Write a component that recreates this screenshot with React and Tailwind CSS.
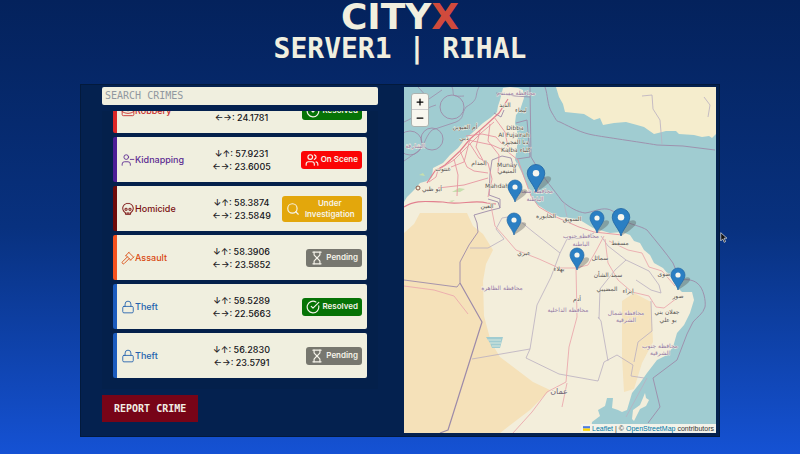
import React from "react";
import {
  UserMinus,
  Gavel,
  Lock,
  Users,
  Search,
  Hourglass,
  CircleCheckBig,
  BriefcaseBusiness,
  Plus,
  Minus,
} from "lucide-react";
import { PiSkull } from "react-icons/pi";

const KINDS = {
  Robbery: { icon: BriefcaseBusiness, tone: "text-[#c92a2a]", edge: "border-[#dc2626]" },
  Kidnapping: { icon: UserMinus, tone: "text-[#5b2a91]", edge: "border-[#4c1d95]" },
  Homicide: { icon: PiSkull, tone: "text-[#7a1010]", edge: "border-[#6e0a0a]" },
  Assault: { icon: Gavel, tone: "text-[#d9480f]", edge: "border-[#f4511e]" },
  Theft: { icon: Lock, tone: "text-[#2462ae]", edge: "border-[#1c5cbf]" },
};

const STATUSES = {
  Resolved: { icon: CircleCheckBig, tone: "bg-[#067306]" },
  "On Scene": { icon: Users, tone: "bg-[#fb0505]" },
  "Under Investigation": { icon: Search, tone: "bg-[#e3a70c]" },
  Pending: { icon: Hourglass, tone: "bg-[#77776f]" },
};

const CRIMES = [
  { kind: "Robbery", lat: "56.7301", lng: "24.1781", status: "Resolved" },
  { kind: "Kidnapping", lat: "57.9231", lng: "23.6005", status: "On Scene" },
  { kind: "Homicide", lat: "58.3874", lng: "23.5849", status: "Under Investigation" },
  { kind: "Assault", lat: "58.3906", lng: "23.5852", status: "Pending" },
  { kind: "Theft", lat: "59.5289", lng: "22.5663", status: "Resolved" },
  { kind: "Theft", lat: "56.2830", lng: "23.5791", status: "Pending" },
];

function CrimeCard({ crime }) {
  const kind = KINDS[crime.kind];
  const status = STATUSES[crime.status];
  const KindIcon = kind.icon;
  const StatusIcon = status.icon;
  return (
    <li
      className={`grid h-[45px] shrink-0 grid-cols-3 items-center rounded-[2px] border-l-4 bg-[#f0efdf] pl-1 pr-[5px] ${kind.edge}`}
    >
      <span className={`flex items-center text-[9px] font-medium ${kind.tone}`}>
        <KindIcon size={14} strokeWidth={1.5} className="shrink-0" />
        {crime.kind}
      </span>
      <span className="text-center text-[9px] font-medium leading-[13px] text-[#15151a]">
        <span className="block">↓↑: {crime.lat}</span>
        <span className="block">←→: {crime.lng}</span>
      </span>
      <span
        className={`flex min-h-[18px] items-center gap-0.5 justify-self-end rounded-[3px] py-0.5 pl-1 pr-1 text-center text-[8px] font-semibold leading-[11px] text-[#f6f4ea] ${status.tone}`}
      >
        <StatusIcon size={14} strokeWidth={2} className="shrink-0" />
        {crime.status}
      </span>
    </li>
  );
}

const MARKERS = [
  [132, 105, 1.25],
  [111, 115, 1],
  [110, 148, 1],
  [193, 146, 1],
  [217, 149, 1.25],
  [173, 183, 1],
  [274, 203, 1],
];

const PLACES = [
  ["دبي", 60, 53],
  ["Dibba", 111, 43],
  ["Al Fujairah", 110, 50],
  ["دبا الفجيرة", 111, 57],
  ["Kalba كلباء", 112, 65],
  ["أم القيوين", 61, 42],
  ["الذيد", 101, 20],
  ["ليماء", 117, 25],
  ["المدام", 75, 78],
  ["غنتوت", 39, 84],
  ["Munay", 103, 80],
  ["المنيعي", 103, 86],
  ["Mahdah", 93, 101],
  ["أبو ظبي", 28, 104],
  ["العين", 83, 121],
  ["الخابورة", 142, 131],
  ["السويق", 168, 134],
  ["مسقط", 216, 158],
  ["عبري", 120, 168],
  ["بهلاء", 155, 184],
  ["سمائل", 196, 173],
  ["سمد الشأن", 204, 190],
  ["المضيبي", 203, 204],
  ["إبراء", 224, 206],
  ["أدم", 173, 214],
  ["ضوى", 260, 189],
  ["صور", 274, 211],
  ["جعلان بني", 263, 227],
  ["بو علي", 264, 235],
];

const REGIONS = [
  ["محافظة مسندم", 112, 8],
  ["الشارقة", 11, 61],
  ["محافظة شمال", 131, 106],
  ["الباطنة", 131, 114],
  ["محافظة جنوب", 177, 151],
  ["الباطنة", 177, 159],
  ["محافظة الظاهرة", 98, 203],
  ["محافظة الداخلية", 164, 225],
  ["محافظة شمال", 222, 228],
  ["الشرقية", 222, 235],
  ["محافظة جنوب", 256, 261],
  ["الشرقية", 256, 268],
];

function MapCanvas() {
  return (
    <svg
      viewBox="0 0 312 346"
      preserveAspectRatio="xMidYMid slice"
      className="absolute inset-0 h-full w-full"
      role="img"
      aria-label="Map of reported crimes in Oman"
    >
      <rect width="312" height="346" fill="#a0ccd1" />
      <path
        fill="#f3eedb"
        d="M0 115L3 110 10 103 16 96 23 94 28 90 29 81 39 76 46 68 54 61 61 52 68 46 79 36 86 31 93 25 94 19 96 13 99 1 106 0 114 1 119 3 120 11 116 23 112 28 111 36 114 48 113 60 111 73 117 84 121 93 129 113 134 118 143 124 156 130 166 131 176 133 189 141 206 146 218 145 226 148 230 154 236 156 240 163 246 168 250 176 259 181 269 193 273 200 278 205 288 205 290 213 286 226 280 238 273 246 269 260 263 268 253 273 243 286 236 296 228 306 223 323 218 325 214 323 208 321 209 311 203 311 201 319 194 323 196 329 188 335 187 346 0 346Z"
      />
      <path
        fill="#f5e1b9"
        d="M0 146L10 137 16 126 63 126 69 139 79 147 89 163 82 177 79 194 80 229 87 255 96 270 129 295 146 303 126 323 96 346 0 346Z"
      />
      <path fill="#f5e3bd" d="M218 214L230 206 247 215 249 255 238 276 230 302 220 305 218 270Z" />
      <path
        fill="#f5edcd"
        d="M152 0L155 10 159 17 161 25 180 27 190 33 196 31 199 38 210 36 222 35 233 38 240 40 250 47 262 44 272 44 275 47 290 48 298 50 305 49 308 51 312 47V0Z"
      />
      <path fill="#f3eedb" d="M241 306L242 311 245 313 242 319 236 322 230 334 228 332 229 323 236 318 239 311Z" />
      <path fill="#a0ccd1" d="M82 250L99 250 96 261 88 261 86 256Z" />
      <path stroke="#d9e8dd" d="M84 253H97M86 256H97M88 259H96" />
      <path fill="#c6dfae" d="M48 105l7-4 6 1-5 3zM45 114l6-1-3 2zM15 88l4-2 2 3z" />

      <g fill="none" stroke="#9d8ba9" strokeWidth="0.9" strokeLinejoin="round">
        <path d="M0 193L53 200 56 196 56 175 65 158 74 145 73 136 70 128 84 124 96 121 94 115 84 112" />
        <path d="M56 196L78 235 44 343 36 346" strokeWidth="1.2" />
        <path d="M141 0C144 8 143 18 148 26S152 34 156 35C168 41 178 46 189 48S235 55 253 58L279 59 311 63" />
        <path d="M126 0L127 70 133 80C139 90 150 103 158 114 166 121 174 125 181 126 189 125 196 121 203 122 211 123 214 130 219 133 227 138 237 139 243 143 252 154 262 166 269 176L276 193C284 192 289 193 293 196 300 201 302 215 301 220 299 227 293 230 289 235L283 247 273 273 249 291 256 320 244 336" />
        <circle cx="48" cy="20" r="12" />
        <circle cx="28" cy="52" r="11" />
        <circle cx="6" cy="56" r="12" />
        <path d="M75 0C70 9 76 12 62 20 57 27 61 31 52 35L28 43C20 51 21 60 13 65L0 74M0 35C12 30 18 22 32 18M14 0L25 12 38 3M48 0C51 7 45 10 60 9M92 6L111 9 126 10" strokeWidth="0.8" />
        <path d="M112 36L123 33 126 70 113 72M90 26L97 30 100 23M86 87L88 73 98 69 107 71 110 82M86 87L85 108 96 112 96 121" />
      </g>

      <g fill="none" stroke="#b9aec0" strokeWidth="0.8">
        <path d="M66 161L84 161 100 152 92 142 98 131 110 129 128 144 156 166 163 152 180 151 190 146M156 166L147 190 133 218 126 262 68 272M126 262L122 271 155 287 194 294 200 275 213 268 229 278 227 289 240 291M194 230L197 234 204 274M195 232L196 202 211 183 222 173 204 159 197 149M222 173L245 184 255 198 257 206 247 203 232 193M247 214L248 244 234 255 230 275M238 9L248 8 249 22 256 33 258 57M300 10L306 18 304 30" />
        <path d="M243 291L222 330M160 116L163 130" />
      </g>
      <g fill="none" stroke="#eba9ae" strokeWidth="0.9">
        <path d="M0 120C12 112 24 115 39 115 54 119 70 112 83 116L92 117M23 96L31 84 41 78 56 64 66 52 82 38 95 26 104 12" stroke="#e2808f" strokeWidth="1.2" />
        <path d="M25 95L32 90 34 83 50 73 63 60 77 46 90 35M64 53L88 58 104 65 114 73 120 90 127 109 135 120 152 130 175 140 190 145 218 148M66 57L75 71 84 76 88 92 84 110M56 64L63 80 70 84 84 86M62 49L78 47 92 50 98 57M86 37L84 54 95 68 94 86M50 72L54 88 53 109M34 101L60 98 84 91M66 52L60 75 47 80M90 30L101 45 104 60M76 44L72 60 82 79" stroke="#e795a0" />
        <path d="M87 119L91 139 100 149 112 163 135 172 155 181 172 181 184 178 192 164 200 149M172 181L173 230 165 260 162 295 143 305 128 325 109 346M201 152L204 176 214 193 228 205 245 209 252 220 260 221 273 211M205 154L224 163 238 166 245 180 258 184 271 199M0 199L30 203 50 209 64 227M163 296L158 320" />
      </g>
      <circle cx="14" cy="101" r="2" fill="none" stroke="#8b5b4b" />

      <g fontFamily='"DejaVu Sans", "Noto Sans", sans-serif' textAnchor="middle" paintOrder="stroke" stroke="#f5f1e3" strokeWidth="0.8">
        {PLACES.map(([name, x, y]) => (
          <text key={name} x={x} y={y} fontSize="6" fill="#57524e">
            {name}
          </text>
        ))}
        {REGIONS.map(([name, x, y]) => (
          <text key={`${name}-${x}-${y}`} x={x} y={y} fontSize="6" fill="#94789f">
            {name}
          </text>
        ))}
        <text x="155" y="307" fontSize="8" fill="#6e6372">
          عمان
        </text>
      </g>

      {MARKERS.map(([x, y, size]) => (
        <g key={`${x}-${y}`} transform={`translate(${x} ${y}) scale(${size})`}>
          <path d="M0 0L4-10C8-14 13-13 12-10S5-3 0 0Z" fill="#4c4c4c" opacity="0.35" />
          <path
            d="M0 0C-1-5-7-10-7-15A7 7 0 0 1 7-15C7-10 1-5 0 0Z"
            fill="#2b7fc3"
            stroke="#2468a5"
            strokeWidth="0.7"
          />
          <circle cy="-15" r="2.6" fill="#f7f6ee" />
        </g>
      ))}
    </svg>
  );
}

function CrimeMap() {
  return (
    <section className="relative min-h-[346px] overflow-hidden" aria-label="Crime map">
      <MapCanvas />
      <div className="absolute left-[7px] top-[6px] flex flex-col rounded-[3px] border border-[#aab3b0] bg-[#f8f7ef] text-black">
        <button type="button" aria-label="Zoom in" className="flex h-4 w-4 items-center justify-center border-b border-[#ccc]">
          <Plus size={10} strokeWidth={3} />
        </button>
        <button type="button" aria-label="Zoom out" className="flex h-4 w-4 items-center justify-center">
          <Minus size={10} strokeWidth={3} />
        </button>
      </div>
      <p className="absolute bottom-0 right-0 flex items-center gap-0.5 whitespace-nowrap bg-[#f3f3ea] px-0.5 font-['Liberation_Sans',sans-serif] text-[7px] leading-[9px] text-[#333]">
        <svg viewBox="0 0 12 8" className="h-[5px] w-[7px]" aria-hidden="true">
          <path fill="#4c7be1" d="M0 0h12v4H0z" />
          <path fill="#ffd500" d="M0 4h12v4H0z" />
        </svg>
        <a href="#leaflet" className="text-[#0078a8]">Leaflet</a>
        <span>| ©</span>
        <a href="#osm" className="text-[#0078a8]">OpenStreetMap</a>
        <span>contributors</span>
      </p>
    </section>
  );
}

export default function App() {
  return (
    <div className="relative min-h-screen bg-linear-to-b from-[#04225c] via-[#08317f] to-[#1552d4] font-['Inter','DejaVu_Sans',sans-serif]">
      <header className="flex flex-col items-center text-center font-bold text-[#f1efdf]">
        <h1 className="font-['DejaVu_Sans',sans-serif] text-[36px] leading-[34px]">
          CITY<span className="text-[#d04a3c]">X</span>
        </h1>
        <h2 className="font-['DejaVu_Sans_Mono',monospace] text-[28px] leading-[30px]">SERVER1 | RIHAL</h2>
      </header>

      <main className="mx-auto mt-5 grid w-4/5 grid-cols-[23fr_26fr] gap-[26px] bg-[#04214f] pb-1 pl-[22px] pr-1 pt-[3px] outline-1 -outline-offset-1 outline-[#031a3c]">
        <section className="flex flex-col items-start gap-1.5" aria-label="Crimes">
          <input
            type="search"
            aria-label="Search crimes"
            placeholder="SEARCH CRIMES"
            className="h-[18px] w-full rounded-[2px] bg-[#f0efdf] px-[3px] font-['DejaVu_Sans_Mono',monospace] text-[10px] leading-[18px] text-[#333] placeholder:text-[#9098a0]"
          />
          <ul className="flex h-[278px] w-full flex-col justify-end gap-1 overflow-hidden bg-[#04204b] px-[11px] pb-[11px]">
            {CRIMES.map((crime) => (
              <CrimeCard key={crime.lng} crime={crime} />
            ))}
          </ul>
          <button
            type="button"
            className="h-[27px] bg-[#770417] px-3 font-['DejaVu_Sans_Mono',monospace] text-[10px] font-bold text-[#f1efe4]"
          >
            REPORT CRIME
          </button>
        </section>
        <CrimeMap />
      </main>

      <svg viewBox="0 0 10 16" className="pointer-events-none absolute left-[90%] top-[232px] h-[11px] w-[7px]" aria-hidden="true">
        <path d="M1 1v12l3-3 2 5 2-1-2-5h4z" fill="#111" stroke="#eee" />
      </svg>
    </div>
  );
}
